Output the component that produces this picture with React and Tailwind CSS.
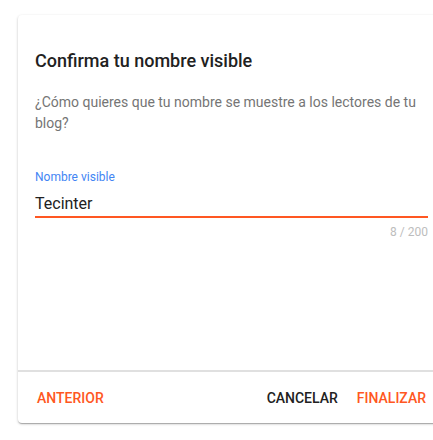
export default function App() {
  return (
    <div className="w-[433px] h-[440px] overflow-hidden bg-white" style={{ fontFamily: 'Roboto, "Liberation Sans", sans-serif' }}>
      <div className="ml-[18px] mt-[15px] w-[427px] h-[408px] rounded-[4px] bg-white shadow-[0_1px_3px_rgba(0,0,0,0.2),0_1px_1px_rgba(0,0,0,0.14),0_2px_1px_-1px_rgba(0,0,0,0.12)] flex flex-col">
        <div className="px-[17px] pt-[34px] flex-1 flex flex-col">
          <h1 className="text-[18px] leading-[24px] font-medium text-[#212121]">Confirma tu nombre visible</h1>
          <p className="mt-[19px] text-[14px] leading-[21px] text-[#757575]">
            ¿Cómo quieres que tu nombre se muestre a los lectores de tu blog?
          </p>
          <label className="mt-[35px] text-[12px] leading-[16px] text-[#4285f4]">Nombre visible</label>
          <div className="mt-[7px] text-[16px] leading-[24px] text-[#212121]">Tecinter</div>
          <div className="h-[2px] bg-[#ff5722]"></div>
          <div className="mt-[6px] text-right text-[12px] leading-[16px] text-[#bdbdbd]">8 / 200</div>
        </div>
        <div className="h-[2px] bg-[#e0e0e0]"></div>
        <div className="h-[51px] flex items-center px-[19px] text-[14px] leading-[20px] font-medium uppercase">
          <span className="text-[#ff5722]">Anterior</span>
          <span className="ml-auto text-[#212121]">Cancelar</span>
          <span className="ml-[19px] text-[#ff5722]">Finalizar</span>
        </div>
      </div>
    </div>
  );
}
